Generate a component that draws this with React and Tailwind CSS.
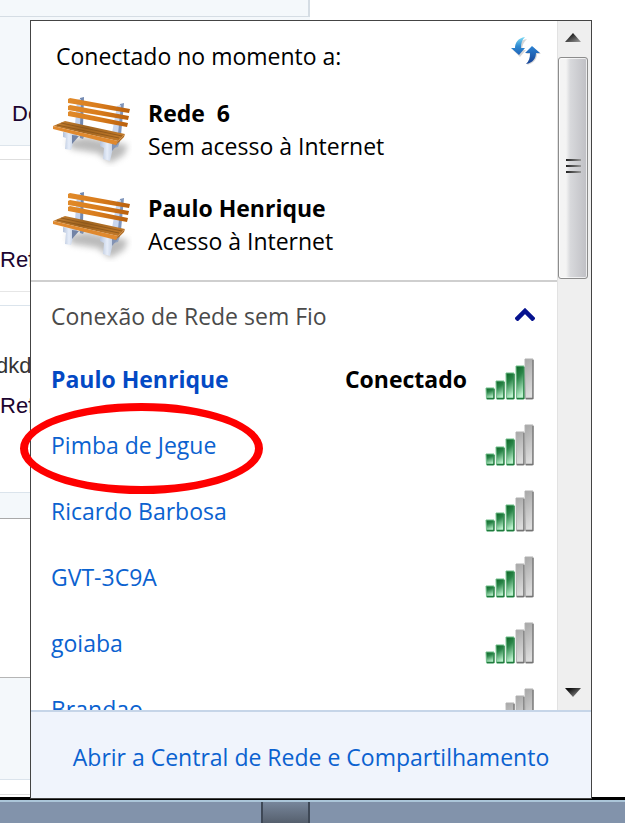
import * as React from 'react';

const CONNECTED = [
    { name: 'Rede  6', status: 'Sem acesso à Internet' },
    { name: 'Paulo Henrique', status: 'Acesso à Internet' },
];

const NETWORKS = [
    { name: 'Paulo Henrique', level: 4, connected: true },
    { name: 'Pimba de Jegue', level: 3 },
    { name: 'Ricardo Barbosa', level: 3 },
    { name: 'GVT-3C9A', level: 3 },
    { name: 'goiaba', level: 3 },
    { name: 'Brandao', level: 0 },
];

// left edge and height of each signal bar
const BARS = [
    [1, 11], [11, 18], [21, 26], [31, 33], [40, 40],
];

function Gradients() {
    return (
        <svg className="absolute h-0 w-0" aria-hidden="true">
            <defs>
                <linearGradient id="on" x1="0" y1="0" x2="0.3" y2="1">
                    <stop offset="0" stopColor="#0a6423" />
                    <stop offset="0.4" stopColor="#2a8549" />
                    <stop offset="1" stopColor="#bdf2ce" />
                </linearGradient>
                <linearGradient id="off" x1="0" y1="0" x2="0.2" y2="1">
                    <stop offset="0" stopColor="#a6a6a6" />
                    <stop offset="1" stopColor="#dedede" />
                </linearGradient>
                <linearGradient id="slat" x1="0" y1="0" x2="1" y2="0">
                    <stop offset="0" stopColor="#e08a2a" />
                    <stop offset="0.5" stopColor="#d97c1c" />
                    <stop offset="1" stopColor="#b9600d" />
                </linearGradient>
                <linearGradient id="seat" x1="0" y1="0" x2="1" y2="0.4">
                    <stop offset="0" stopColor="#c98232" />
                    <stop offset="0.5" stopColor="#9f6420" />
                    <stop offset="1" stopColor="#bd7627" />
                </linearGradient>
                <linearGradient id="leg" x1="0" y1="0" x2="1" y2="0">
                    <stop offset="0" stopColor="#b4c2da" />
                    <stop offset="0.4" stopColor="#e6edf9" />
                    <stop offset="1" stopColor="#a5b5d0" />
                </linearGradient>
                <linearGradient id="down" x1="0" y1="0" x2="0" y2="1">
                    <stop offset="0" stopColor="#7fdcf5" />
                    <stop offset="0.5" stopColor="#2f8bd2" />
                    <stop offset="1" stopColor="#1f62b8" />
                </linearGradient>
                <linearGradient id="up" x1="0" y1="0" x2="0" y2="1">
                    <stop offset="0" stopColor="#2b83d4" />
                    <stop offset="1" stopColor="#174293" />
                </linearGradient>
                <linearGradient id="arrow" x1="0" y1="0" x2="1" y2="1">
                    <stop offset="0.2" stopColor="#111111" />
                    <stop offset="1" stopColor="#a0a0a0" />
                </linearGradient>
                <filter id="soft" x="-30%" y="-50%" width="160%" height="200%">
                    <feGaussianBlur stdDeviation="3" />
                </filter>
            </defs>
        </svg>
    );
}

function BenchIcon() {
    return (
        <svg viewBox="0 0 80 72" className="h-[72px] w-20 shrink-0" aria-hidden="true">
            <path d="M14 46 L34 42 L76 50 L72 60 L58 68 L46 58 L20 54Z" fill="#777" opacity="0.5" filter="url(#soft)" />
            {/* back posts */}
            <path d="M28 3 L32 2 L31 32 L26 31Z" fill="#7289b2" />
            <path d="M25 5 L29 4 L28 31 L23 30Z" fill="#c3d2ec" />
            <path d="M68 9 L72 8 L69 40 L64 38Z" fill="#7f95bb" />
            <path d="M65 11 L69 10 L66 39 L60 38Z" fill="#cad7ee" />
            {/* back slats */}
            <path d="M16 4 L18 3 L78 14 L77 18 L16 8Z" fill="url(#slat)" />
            <path d="M16 11 L18 10 L77 21 L76 25 L16 15Z" fill="url(#slat)" />
            <path d="M16 17 L18 16 L76 28 L75 32 L16 21Z" fill="url(#slat)" />
            {/* rear legs */}
            <path d="M27 38 L33 39 L31 44 L28 43Z" fill="#7d8fae" />
            <path d="M65 46 L68 46 L66 52 L62 53Z" fill="#93a4c1" />
            {/* front legs */}
            <path d="M11 37 L26 39 L22 44 L19 55 L13 54 L14 43 L11 42Z" fill="url(#leg)" />
            <path d="M20 40 L27 41 L20 49Z" fill="#7283a5" />
            <path d="M48 45 L66 48 L61 53 L58 66 L51 64 L52 53 L48 51Z" fill="url(#leg)" />
            <path d="M60 49 L66 49 L60 56Z" fill="#8393b3" />
            {/* seat */}
            <path d="M1 31 L13 26 L73 39 L66 46Z" fill="url(#seat)" />
            <path d="M5 30 L67 43 M9 28 L70 41" stroke="#835019" strokeWidth="0.7" />
            <path d="M1 31 L66 46 L64 50 L1 34Z" fill="#e0892e" />
            <path d="M66 46 L73 39 L72 42 L64 50Z" fill="#b26a1d" />
        </svg>
    );
}

function SignalIcon({ level }) {
    return (
        <svg viewBox="0 0 50 42" className="h-[42px] w-[50px] shrink-0" aria-hidden="true">
            {BARS.map(([x, h], i) => {
                const on = i < level;
                return (
                    <g key={x}>
                        <path
                            d={`M${x} ${41 - h} h8 l-0.5 ${h} h-7 Z`}
                            fill={on ? 'url(#on)' : 'url(#off)'}
                            stroke={on ? '#6fbd89' : '#b0b0b0'}
                            strokeWidth="1"
                            strokeLinejoin="round"
                        />
                        <path
                            d={`M${x + 8} ${42 - h} V40.5 H${x + 1}`}
                            fill="none"
                            stroke={on ? '#1f7a3c' : '#747474'}
                            strokeWidth="1.3"
                            strokeLinejoin="round"
                        />
                    </g>
                );
            })}
        </svg>
    );
}

function RefreshIcon() {
    return (
        <svg viewBox="0 0 30 30" className="h-[30px] w-[30px]" aria-hidden="true">
            <path d="M15 2 C8 3 5 8 5 13 H1 L8 20 L14 13 H10 C10 8 12 5 15 2Z" fill="#999" opacity="0.4" transform="translate(1 1)" />
            <path d="M14 1 C7 2 4 7 4 12 H0 L8 19 L14 12 H10 C10 7 11 4 14 1Z" fill="url(#down)" />
            <path d="M16 29 C23 27 26 23 26 18 H30 L22 11 L15 18 H20 C20 23 19 26 16 29Z" fill="#999" opacity="0.4" />
            <path d="M15 28 C22 27 25 22 25 17 H29 L21 10 L14 17 H19 C19 22 18 25 15 28Z" fill="url(#up)" />
        </svg>
    );
}

function Scrollbar() {
    return (
        <div className="flex w-[34px] shrink-0 flex-col border-l border-[#e2e2e2] bg-[#efefef] pr-[3px]">
            <button type="button" aria-label="Rolar para cima" className="flex h-9 shrink-0 items-center justify-center pb-1">
                <svg viewBox="0 0 16 9" className="h-[9px] w-4"><path d="M8 0 L16 9 H0Z" fill="url(#arrow)" /></svg>
            </button>
            <div className="flex h-[222px] shrink-0 flex-col items-center justify-center gap-1 rounded-[3px] border border-[#8c8c8c] bg-linear-to-r from-[#f4f4f4] from-25% via-[#d8d9dc] via-40% to-[#bfbfc4] pb-1 ring-1 ring-white/70 ring-inset">
                <span className="h-0.5 w-[15px] bg-linear-to-r from-[#222] to-[#999]" />
                <span className="h-0.5 w-[15px] bg-linear-to-r from-[#222] to-[#999]" />
                <span className="h-0.5 w-[15px] bg-linear-to-r from-[#222] to-[#999]" />
            </div>
            <button type="button" aria-label="Rolar para baixo" className="mt-auto flex h-9 shrink-0 items-center justify-center">
                <svg viewBox="0 0 16 9" className="h-[9px] w-4"><path d="M0 0 H16 L8 9Z" fill="url(#arrow)" /></svg>
            </button>
        </div>
    );
}

// page that is partly hidden behind the flyout
function PageBehind() {
    return (
        <div className="col-start-1 row-start-1 overflow-hidden font-['Liberation_Sans',sans-serif] text-[22px] leading-6 text-[#1c0530]">
            <div className="h-[17px] w-[310px] border-r-2 border-b border-[#d5dde4] bg-[#f4f8fb]" />
            <div className="h-[129px] w-[310px] border-b border-[#dde5ec] bg-[#f4f8fb] pt-[85px] pl-3">De</div>
            <div className="h-3.5 w-[310px] border-b border-[#dedede]" />
            <div className="h-[132px] w-[310px] border-b border-[#e6e6e6] pt-[88px]">Ref</div>
            <div className="h-3.5 w-[310px] border-b border-[#dbe4ec]" />
            <div className="flex h-[187px] w-[310px] flex-col gap-4 border-b border-[#dbe4ec] pt-12">
                <span className="-ml-1 text-[#333]">dkd</span>
                <span>Ref</span>
            </div>
            <div className="h-[26px] w-[310px] border-b border-[#a9a9a9] bg-[#f4f8fb]" />
            <div className="h-[159px] w-[310px] border-b border-[#b5b5b5]" />
            <div className="h-[102px] w-[310px] border-b border-[#dbe4ec] bg-[#f4f8fb]" />
            <div className="h-[15px] w-[310px] border-b border-[#dedede]" />
        </div>
    );
}

export default function App() {
    return (
        <div className="flex h-screen flex-col bg-white font-['Open_Sans','Noto_Sans',sans-serif] text-[23px] text-black">
            <Gradients />
            <main className="grid min-h-0 flex-1 grid-cols-1 grid-rows-[minmax(0,1fr)] border-b-[3px] border-black">
                <PageBehind />
                <section className="relative col-start-1 row-start-1 mt-5 mr-[33px] -mb-0.5 ml-[30px] flex flex-col border border-[#444] bg-white">
                    <div className="flex min-h-0 flex-1 overflow-hidden">
                        <div className="flex min-w-0 flex-1 flex-col">
                            <div className="flex shrink-0 flex-col gap-[23px] border-b-2 border-[#cfcfcf] pt-[13px] pr-4 pb-[18px] pl-[21px]">
                                <div className="flex items-start justify-between pl-1">
                                    <h1 className="pt-1.5 leading-8">Conectado no momento a:</h1>
                                    <button type="button" aria-label="Atualizar" className="pt-0.5"><RefreshIcon /></button>
                                </div>
                                {CONNECTED.map((c) => (
                                    <div key={c.name} className="flex gap-4">
                                        <BenchIcon />
                                        <div className="pt-0.5 leading-[33px] whitespace-pre">
                                            <p className="font-bold">{c.name}</p>
                                            <p>{c.status}</p>
                                        </div>
                                    </div>
                                ))}
                            </div>
                            <button type="button" className="flex h-16 shrink-0 items-center justify-between pr-[22px] pl-5 text-[#4a4a4a]">
                                <span className="pt-1">Conexão de Rede sem Fio</span>
                                <svg viewBox="0 0 20 13" className="h-[13px] w-5" aria-hidden="true">
                                    <path d="M1 12 L10 3 L19 12" fill="none" stroke="#06128f" strokeWidth="4.5" />
                                </svg>
                            </button>
                            <ul>
                                {NETWORKS.map((n) => (
                                    <li key={n.name} className="flex h-[66px] items-center pr-[22px] pl-5">
                                        <a href="#" className={n.connected ? 'flex-1 font-bold text-[#0349c4]' : 'flex-1 text-[#0b62d0]'}>{n.name}</a>
                                        {n.connected && <span className="mr-[18px] font-bold">Conectado</span>}
                                        <SignalIcon level={n.level} />
                                    </li>
                                ))}
                            </ul>
                        </div>
                        <Scrollbar />
                    </div>
                    <footer className="flex h-[88px] shrink-0 items-center justify-center border-t-2 border-[#c6d5e8] bg-[#f0f4fc] pt-1">
                        <a href="#" className="whitespace-nowrap text-[#0b62d0]">Abrir a Central de Rede e Compartilhamento</a>
                    </footer>
                    {/* hand-drawn mark round the second network */}
                    <div className="pointer-events-none absolute top-[382px] -left-[11px] h-[91px] w-[243px] rounded-[50%] border-8 border-[#fe0000]" />
                </section>
            </main>
            <div className="flex h-[23px] shrink-0 border-t-2 border-[#abc6d9] bg-[#8293ab] pl-[261px]">
                <div className="w-[49px] border-x-2 border-[#3e4856] bg-linear-to-b from-[#77869b] to-[#56606e]" />
            </div>
        </div>
    );
}
